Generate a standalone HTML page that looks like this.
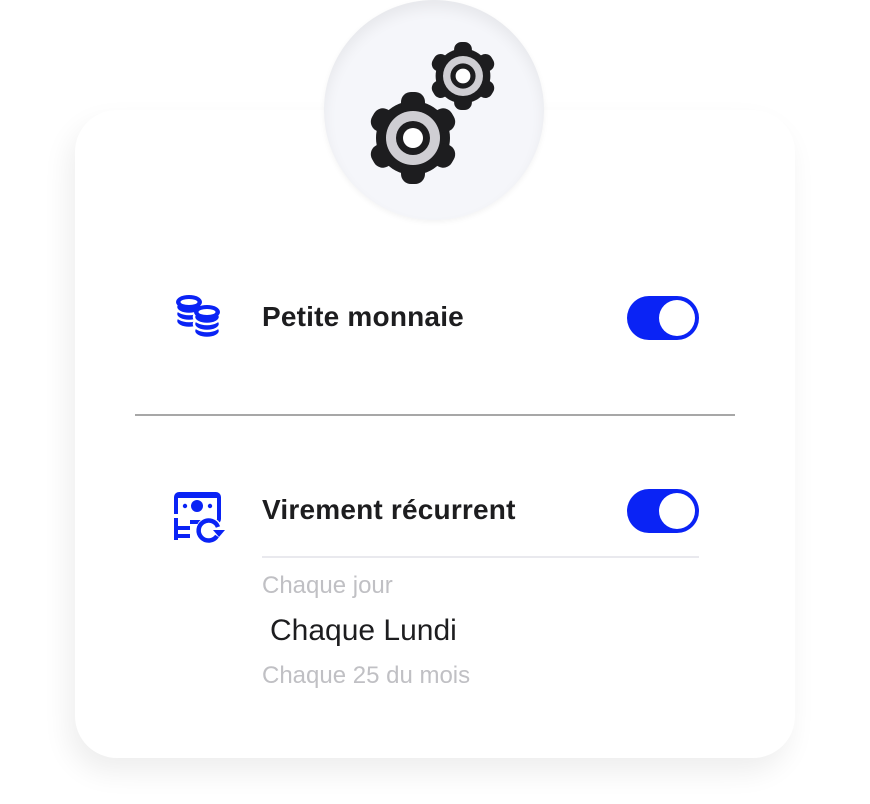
<!DOCTYPE html>
<html><head><meta charset="utf-8"><style>
html,body{margin:0;padding:0;background:#fff;width:870px;height:804px;overflow:hidden;font-family:"Liberation Sans",sans-serif;}
.card{position:absolute;left:75px;top:110px;width:720px;height:648px;background:#fff;border-radius:42px;box-shadow:-6px 14px 28px rgba(0,0,0,0.07);}
.circle{position:absolute;left:324px;top:0;width:220px;height:220px;border-radius:50%;background:#f5f6fa;box-shadow:inset 0 8px 14px rgba(0,0,0,0.06),0 2px 6px rgba(0,0,0,0.05);}
.t{position:absolute;color:#1d1d1f;font-size:28px;font-weight:bold;letter-spacing:0.2px;}
.tog{position:absolute;width:72px;height:44px;border-radius:22px;background:#0a23f5;}
.tog::after{content:"";position:absolute;right:4px;top:4px;width:36px;height:36px;border-radius:50%;background:#fff;}
.o{position:absolute;font-size:24px;font-weight:300;color:#c0c0c4;}
</style></head><body>
<div class="card"></div>
<div class="circle"></div>
<svg style="position:absolute;left:0;top:0" width="870" height="804">
<defs>
<g id="gear">
<circle r="37" fill="#1d1d1f"/>
<g fill="#1d1d1f">
<rect x="-12" y="-46" width="24" height="22" rx="10"/>
<rect x="-12" y="-46" width="24" height="22" rx="10" transform="rotate(60)"/>
<rect x="-12" y="-46" width="24" height="22" rx="10" transform="rotate(120)"/>
<rect x="-12" y="-46" width="24" height="22" rx="10" transform="rotate(180)"/>
<rect x="-12" y="-46" width="24" height="22" rx="10" transform="rotate(240)"/>
<rect x="-12" y="-46" width="24" height="22" rx="10" transform="rotate(300)"/>
</g>
<circle r="27" fill="#cfced3"/>
<circle r="17" fill="#1d1d1f"/>
<circle r="10" fill="#fff"/>
</g>
<g id="stack">
<ellipse cx="0" cy="19" rx="13" ry="7" fill="#0a23f5" stroke="#fff" stroke-width="2.5"/>
<ellipse cx="0" cy="12" rx="13" ry="7" fill="#0a23f5" stroke="#fff" stroke-width="2.5"/>
<ellipse cx="0" cy="5" rx="13" ry="7" fill="#0a23f5" stroke="#fff" stroke-width="2.5"/>
<ellipse cx="0" cy="0" rx="13" ry="7" fill="#0a23f5"/>
<ellipse cx="0" cy="0" rx="8.5" ry="3" fill="#fff"/>
</g>
</defs>
<use href="#gear" transform="translate(413,138)"/>
<use href="#gear" transform="translate(463,76) scale(0.74)"/>
<line x1="135" y1="415" x2="735" y2="415" stroke="#8a8a8a" stroke-width="1.5"/>
<line x1="262" y1="557" x2="699" y2="557" stroke="#e2e2e8" stroke-width="1.5"/>
<use href="#stack" transform="translate(189,302)"/>
<use href="#stack" transform="translate(207,312)"/>
<rect x="176" y="494" width="43" height="28" rx="3" fill="none" stroke="#0a23f5" stroke-width="4"/>
<rect x="176" y="494" width="43" height="4" fill="#0a23f5"/>
<circle cx="197" cy="506" r="6" fill="#0a23f5"/>
<circle cx="185" cy="506" r="2.2" fill="#0a23f5"/>
<circle cx="210" cy="506" r="2.2" fill="#0a23f5"/>
<rect x="174" y="514" width="16" height="26" fill="#fff"/>
<path d="M176 520v16h14M176 528h14" stroke="#0a23f5" stroke-width="4" fill="none"/>
<rect x="174" y="518" width="4" height="22" fill="#0a23f5"/>
<circle cx="209" cy="530" r="13" fill="#fff"/>
<path d="M218 527a10 10 0 1 0-1 9" fill="none" stroke="#0a23f5" stroke-width="4.5"/>
<path d="M213 530l12 0l-6 7z" fill="#0a23f5"/>
</svg>
<div class="t" style="left:262px;top:301px;">Petite monnaie</div>
<div class="tog" style="left:627px;top:296px;"></div>
<div class="t" style="left:262px;top:494px;">Virement récurrent</div>
<div class="tog" style="left:627px;top:489px;"></div>
<div class="o" style="left:262px;top:572px;">Chaque jour</div>
<div class="o" style="left:270px;top:614px;font-size:30px;color:#1d1d1f;">Chaque Lundi</div>
<div class="o" style="left:262px;top:662px;">Chaque 25 du mois</div>
</body></html>
